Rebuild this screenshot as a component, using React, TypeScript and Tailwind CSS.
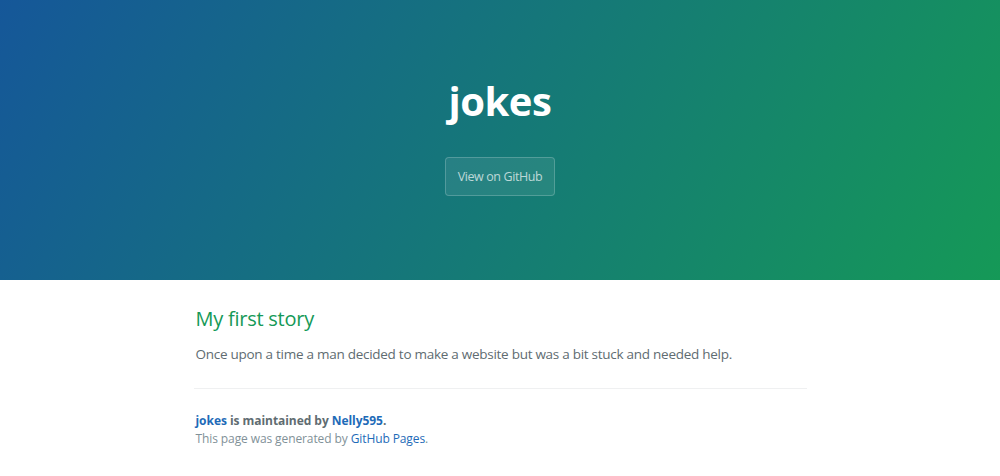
export default function App() {
  return (
    <div className="min-h-screen bg-white font-['Open_Sans',sans-serif] text-[#606c71]">
      {/* Header */}
      <section className="flex h-[280px] flex-col items-center bg-[linear-gradient(120deg,#155799,#159957)] pt-[70px] text-center text-white">
        <h1 className="text-[40px] font-bold leading-[62px] tracking-[-0.5px]">jokes</h1>
        <a
          href="#"
          className="mt-[25px] inline-block rounded-[4px] border border-white/20 bg-white/[0.08] px-[12px] py-[8px] text-[12.5px] leading-[21px] tracking-[-0.4px] text-white/70"
        >
          View on GitHub
        </a>
      </section>

      {/* Content */}
      <main className="mx-auto w-[613px] pl-[2px] pt-[23px]">
        <h2 className="text-[20px] leading-[31px] tracking-[-0.25px] text-[#159957]">My first story</h2>
        <p className="mt-[9px] text-[13.5px] leading-[22px] tracking-[-0.27px]">
          Once upon a time a man decided to make a website but was a bit stuck and needed help.
        </p>

        <footer className="-ml-[2px] mt-[23px] border-t border-[#eff0f1] pl-[2px] pt-[23px] text-[12px] leading-[18px]">
          <span className="block font-bold tracking-[-0.05px]">
            <a href="#" className="text-[#1e6bb8]">jokes</a> is maintained by{' '}
            <a href="#" className="text-[#1e6bb8]">Nelly595</a>.
          </span>
          <span className="block tracking-[-0.1px] text-[#819198]">
            This page was generated by <a href="#" className="text-[#1e6bb8]">GitHub Pages</a>.
          </span>
        </footer>
      </main>
    </div>
  );
}
